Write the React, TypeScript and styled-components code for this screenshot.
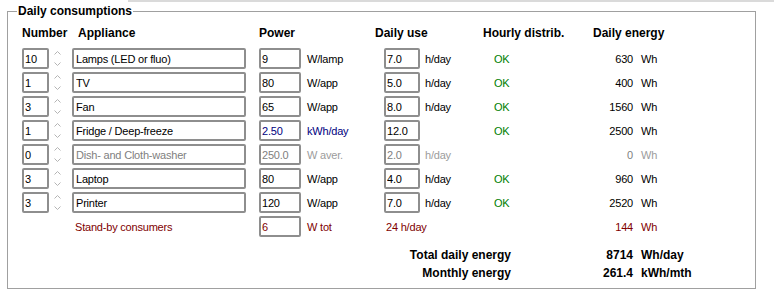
import React, { FunctionComponent } from 'react';
import styled, { createGlobalStyle } from 'styled-components';

type Tone = 'normal' | 'blue' | 'muted' | 'faint' | 'red' | 'ok';

const tones: Record<Tone, string> = {
  normal: '#000000',
  blue: '#000080',
  muted: '#808080',
  faint: '#9c9c9c',
  red: '#800000',
  ok: '#008000'
};

interface ApplianceRow {
  count: string;
  name: string;
  power: string;
  powerUnit: string;
  use: string;
  useUnit: string;
  ok: boolean;
  energy: string;
  powerTone?: Tone;
  disabled?: boolean;
}

const rows: ApplianceRow[] = [
  { count: '10', name: 'Lamps (LED or fluo)', power: '9', powerUnit: 'W/lamp', use: '7.0', useUnit: 'h/day', ok: true, energy: '630' },
  { count: '1', name: 'TV', power: '80', powerUnit: 'W/app', use: '5.0', useUnit: 'h/day', ok: true, energy: '400' },
  { count: '3', name: 'Fan', power: '65', powerUnit: 'W/app', use: '8.0', useUnit: 'h/day', ok: true, energy: '1560' },
  { count: '1', name: 'Fridge / Deep-freeze', power: '2.50', powerUnit: 'kWh/day', use: '12.0', useUnit: '', ok: true, energy: '2500', powerTone: 'blue' },
  { count: '0', name: 'Dish- and Cloth-washer', power: '250.0', powerUnit: 'W aver.', use: '2.0', useUnit: 'h/day', ok: false, energy: '0', disabled: true },
  { count: '3', name: 'Laptop', power: '80', powerUnit: 'W/app', use: '4.0', useUnit: 'h/day', ok: true, energy: '960' },
  { count: '3', name: 'Printer', power: '120', powerUnit: 'W/app', use: '7.0', useUnit: 'h/day', ok: true, energy: '2520' }
];

const GlobalStyle = createGlobalStyle`
  html, body {
    margin: 0;
    padding: 0;
    background: #ffffff;
  }
  body {
    font-family: "Liberation Sans", Arial, sans-serif;
    font-size: 11px;
    letter-spacing: -0.2px;
    color: #000000;
  }
`;

const TopEdge = styled.div`
  height: 2px;
  margin-left: 128px;
  background: #dadada;
`;

const Frame = styled.fieldset`
  box-sizing: border-box;
  width: 749px;
  min-width: 0;
  margin: 2px 0 0 7px;
  padding: 8px 0 6px 14px;
  border: 1px solid #a0a0a0;
`;

const Legend = styled.legend`
  margin-left: -5px;
  padding: 0 1px;
  font-size: 12px;
  font-weight: bold;
  letter-spacing: 0;
  line-height: 14px;
`;

const HeaderRow = styled.div`
  display: grid;
  grid-template-columns: 56px 181px 116px 108px 110px 1fr;
  font-size: 12px;
  font-weight: bold;
  letter-spacing: 0;
  line-height: 14px;
`;

const Table = styled.div`
  display: grid;
  grid-template-columns: 28px 22px 187px 48px 77px 41px 69px 60px 79px 1fr;
  grid-auto-rows: 21px;
  row-gap: 3px;
  align-items: center;
  margin-top: 8px;
`;

const Field = styled.input<{ $width: number; $tone?: Tone }>`
  box-sizing: border-box;
  width: ${({ $width }) => $width}px;
  height: 21px;
  margin: 0;
  padding: 0 0 0 1px;
  border: 2px solid #8e8e8e;
  border-radius: 2px;
  background: #ffffff;
  font: inherit;
  letter-spacing: inherit;
  color: ${({ $tone }) => tones[$tone ?? 'normal']};
  outline: none;
`;

const Cell = styled.span<{ $tone?: Tone; $align?: 'left' | 'right'; $pad?: number; $span?: number }>`
  color: ${({ $tone }) => tones[$tone ?? 'normal']};
  text-align: ${({ $align }) => $align ?? 'left'};
  padding-left: ${({ $pad }) => $pad ?? 0}px;
  ${({ $span }) => ($span ? `grid-column: span ${$span};` : '')}
  white-space: nowrap;
`;

const SpinBox = styled.div`
  display: flex;
  flex-direction: column;
  justify-content: space-between;
  align-items: center;
  width: 14px;
  height: 21px;
  padding: 3px 0;
  box-sizing: border-box;
`;

const Totals = styled.div`
  display: grid;
  grid-template-columns: 489px 122px 1fr;
  grid-auto-rows: 18px;
  align-items: center;
  margin-top: 9px;
  font-size: 12px;
  font-weight: bold;
  letter-spacing: 0;
`;

const Chevron: FunctionComponent<{ up?: boolean }> = ({ up }) => (
  <svg width='7' height='4' viewBox='0 0 7 4'>
    <path
      d={ up ? 'M0.5 3.5 L3.5 0.5 L6.5 3.5' : 'M0.5 0.5 L3.5 3.5 L6.5 0.5' }
      fill='none'
      stroke='#b4b4b4'
      strokeWidth='1'
    />
  </svg>
);

const Spinner: FunctionComponent = () => (
  <SpinBox>
    <Chevron up={ true } />
    <Chevron />
  </SpinBox>
);

const Row: FunctionComponent<{ row: ApplianceRow }> = ({ row }) => {
  const off = row.disabled;
  const powerTone: Tone = off ? 'muted' : row.powerTone ?? 'normal';
  const unitTone: Tone = off ? 'faint' : row.powerTone ?? 'normal';

  return (
    <>
      <Field $width={ 27 } readOnly value={ row.count } />
      <Spinner />
      <Field $width={ 174 } readOnly value={ row.name } $tone={ off ? 'muted' : 'normal' } style={ { paddingLeft: 2 } } />
      <Field $width={ 42 } readOnly value={ row.power } $tone={ powerTone } />
      <Cell $tone={ unitTone }>{ row.powerUnit }</Cell>
      <Field $width={ 36 } readOnly value={ row.use } $tone={ off ? 'muted' : 'normal' } />
      <Cell $tone={ off ? 'faint' : 'normal' }>{ row.useUnit }</Cell>
      <Cell $tone='ok'>{ row.ok ? 'OK' : '' }</Cell>
      <Cell $align='right' $tone={ off ? 'muted' : 'normal' }>{ row.energy }</Cell>
      <Cell $pad={ 8 } $tone={ off ? 'faint' : 'normal' }>Wh</Cell>
    </>
  );
};

const App: FunctionComponent = () => (
  <>
    <GlobalStyle />
    <TopEdge />
    <Frame>
      <Legend>Daily consumptions</Legend>

      <HeaderRow>
        <span>Number</span>
        <span>Appliance</span>
        <span>Power</span>
        <span>Daily use</span>
        <span>Hourly distrib.</span>
        <span>Daily energy</span>
      </HeaderRow>

      <Table>
        { rows.map(row => <Row key={ row.name } row={ row } />) }

        <Cell $span={ 2 } />
        <Cell $tone='red' $pad={ 3 }>Stand-by consumers</Cell>
        <Field $width={ 42 } readOnly value='6' $tone='red' />
        <Cell $tone='red'>W tot</Cell>
        <Cell $tone='red' $pad={ 2 } $span={ 2 }>24 h/day</Cell>
        <Cell />
        <Cell $align='right' $tone='red'>144</Cell>
        <Cell $pad={ 8 } $tone='red'>Wh</Cell>
      </Table>

      <Totals>
        <Cell $align='right'>Total daily energy</Cell>
        <Cell $align='right'>8714</Cell>
        <Cell $pad={ 8 }>Wh/day</Cell>
        <Cell $align='right'>Monthly energy</Cell>
        <Cell $align='right'>261.4</Cell>
        <Cell $pad={ 8 }>kWh/mth</Cell>
      </Totals>
    </Frame>
  </>
);

export default App;
